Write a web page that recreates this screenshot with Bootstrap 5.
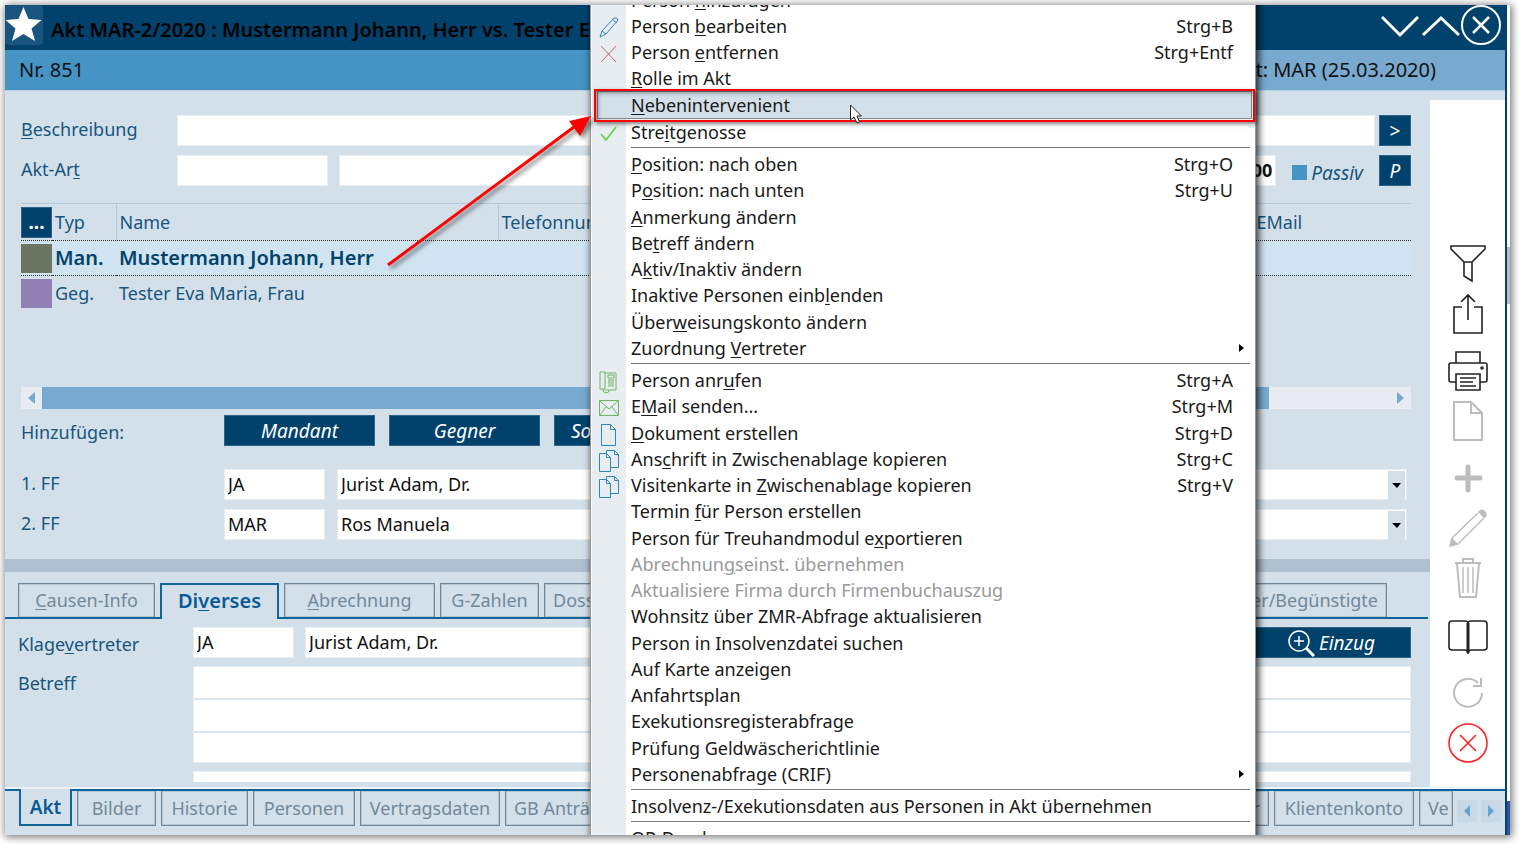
<!DOCTYPE html>
<html lang="de">
<head>
<meta charset="utf-8">
<meta name="viewport" content="width=device-width, initial-scale=1">
<title>Akt MAR-2/2020</title>
<link href="https://cdn.jsdelivr.net/npm/bootstrap@5.3.0/dist/css/bootstrap.min.css" rel="stylesheet">
<script src="https://cdn.jsdelivr.net/npm/bootstrap@5.3.0/dist/js/bootstrap.bundle.min.js"></script>
<style>
:root{--navy:#00426b;--blue:#4594c4;--sky:#78aacf;--pane:#d4e0e9;--label:#16567f;--line:#b4cadb;--tab:#71889a;--accent:#0f6499}
body{font-family:"Noto Sans","Open Sans",sans-serif;font-size:18px;line-height:26px;color:#111;background:#fff}
u{text-underline-offset:2px;text-decoration-thickness:1px}
.frame{margin:5px 9px 9px 5px;padding-right:3px;box-shadow:1px 1px 8px 1px rgba(0,0,0,.55);
 background:linear-gradient(#fff 242px,#bcbcbc 242px,#bcbcbc 299px,#fff 299px,#fff 796px,#2b55a0 796px)}
.app{border-right:2px solid var(--navy);background:var(--pane);overflow:hidden}
.titlebar{height:45px;background:var(--navy);font-weight:600;font-size:20px;color:#000}
.starbox{width:38px;height:40px;background:#1a5580;border-radius:4px}
.winbtn{background:none;border:0;padding:0;width:40px;height:40px;line-height:0}
.infobar{height:41px;background:var(--sky);border-bottom:1px solid #b9d0e2;font-size:20px}
.infobar .nr{width:50%;background:var(--blue);padding-left:14px}
.infobar .last{padding-right:69px}
.main{padding-top:24px}
.upper{padding-left:16px;padding-right:19px}
.lab{color:var(--label);white-space:nowrap;padding-top:1px}
.upper .w-a{width:156px}.upper .w-b{width:203px}
.lower{padding-left:13px;padding-right:19px}
.lower .lab{width:175px;padding-top:4px}
.field{height:31px;border:1px solid #e6edf3;background:#fff;border-radius:0;padding:0 3px 2px;color:#111;min-width:0;outline:0;appearance:none}
.w100{width:101px}.w150{width:151px}
.rowgap{margin-bottom:9px}
.gap10{margin-left:11px;margin-right:11px}
.navybtn{height:31px;border:1px solid #2f6488;background:var(--navy);color:#fff;border-radius:0;padding:0;font-style:italic;font-size:19px;line-height:26px;white-space:nowrap}
.sq{width:32px}
.passiv{font-size:19px;font-style:italic}
.tick{appearance:none;width:15px;height:15px;background:var(--blue);margin:0}
.persons{height:184px;margin-top:17px}
.persons table{table-layout:fixed;color:var(--label);line-height:26px}
.persons th{font-weight:400;height:37px;border-top:1px solid var(--line);border-left:1px solid var(--line);padding:0 3px}
.persons th:first-child,.persons th:nth-child(2){border-left:0}
.persons td{height:35px;padding:0 3px}
.persons .first{padding:0}
.persons .sel td{background:#cfe3f1;border:dotted #333;border-width:1px 0;font-weight:600;font-size:20px;color:var(--navy)}
.swatch{width:31px;height:29px}
.scroller{height:22px;background:#e8ecf2}
.scroller button{width:21px;border:0;background:#e8ecf2;padding:0;line-height:0}
.thumb{width:1227px;background:var(--sky)}
.adds{margin:6px 0 23px}
.adds .lab{padding-top:4px}
.adds .d-flex{gap:14px}
.combo{margin-right:4px}
.combo svg{right:2px;top:2px;width:17px;height:29px;background:var(--pane);pointer-events:none}
.splitter{height:13px;background:#afbfcd;margin-top:19px}
.tabs{border-bottom:2px solid var(--accent);height:36px;margin-right:2px;padding-left:13px;margin-top:11px}
.tabbtn{border:1px solid var(--tab);box-shadow:0 0 0 1px #b5c4cf inset;background:var(--pane);color:var(--tab);padding:0;white-space:nowrap;flex:none}
.tabs .tabbtn{border-bottom:0;height:34px;padding-bottom:2px}
.tabs .on{height:36px;font-size:20px;padding-bottom:3px}
.tabs .lasttab{margin-right:41px}
.tabgap{margin:0 5px}
.on{border:2px solid var(--accent);box-shadow:none;color:#075b96;font-weight:600}
.betreff{height:97px;resize:none;line-height:32px;overflow:hidden;background:repeating-linear-gradient(#fff 0 31px,#d9e4ec 31px 33px)}
.cutrow{height:11px;overflow:hidden;margin:8px 0 5px}
.side{width:75px;background:#fff;margin-top:9px;padding-top:139px;flex:none}
.side button{display:block;border:0;background:none;padding:0;margin:0 auto;width:50px;height:50px;line-height:0}
.side .sp{margin-top:7px}
.side svg{fill:none;stroke:#222;stroke-width:1.6}
.side .off svg{stroke:#bcbcbc;stroke-width:2}
.foot{height:48px;border-top:2px solid #eef3f7}
.foot .bar{border-top:2px solid var(--accent);padding:0 4px 0 14px;height:46px}
.foot .tabbtn{border-top:0;height:35px}
.foot .on{position:relative;margin-top:-2px;height:37px;background:var(--pane);font-size:19px}
.foot .pg{width:20px;height:22px;border:0;padding:0;background:#c8d8e4;line-height:0;margin-top:9px}
.ctx{position:absolute;left:585px;top:-19px;width:666px;border:1px solid #999;border-radius:0;padding:0;margin:0;
 background:linear-gradient(90deg,#fafafa 1px,#e8edf1 1px,#e8edf1 35px,#fff 35px);box-shadow:2px 0 7px 1px rgba(0,0,0,.75);color:#111;z-index:5}
.ctx ul{list-style:none;margin:0;padding:0;display:flex;flex-direction:column}
.ctx li{flex:1 1 0;min-height:0;position:relative}
.ctx button{display:flex;align-items:center;width:100%;height:100%;border:0;background:none;padding:0 22px 0 0;line-height:26px;color:#1a1a1a;text-align:left;white-space:nowrap}
.ctx button:disabled{color:#999}
.ctx .ic{width:40px;height:26px;padding:3px 0 0 7px;flex:none;line-height:0}
.ctx .ic svg{fill:none;stroke:#2d86bd;stroke-width:1}
.ctx .sub{padding-right:10px}
.ctx hr{margin:2px 5px 3px 40px;border-top:1px solid #777;opacity:1}
.g1{height:158px}.g2{height:210px}.g3{height:420px}.g4{height:26px}
.hot{background:var(--pane);border:1px solid #7f8a92;margin:0 3px 0 6px}
.hot .ic{width:33px}
.mark-red{position:absolute;inset:-3px -4px -4px -4px;border:2px solid #f00;box-shadow:2px 2px 4px rgba(0,0,0,.5),inset 2px 2px 4px rgba(0,0,0,.4);pointer-events:none}
.pointer{position:absolute;left:251px;top:12px;z-index:2}
.arrow{position:absolute;left:375px;top:100px;filter:drop-shadow(3px 3px 2px rgba(0,0,0,.5));z-index:6;pointer-events:none}
</style>
</head>
<body>
<div class="frame">
<div class="app position-relative">
  <header class="titlebar d-flex align-items-center">
    <div class="starbox flex-shrink-0 align-self-start"><svg width="38" height="40" viewBox="0 0 38 40"><path fill="#fff" d="M18.500 2 L23.500 14 L36.500 15 L26.500 23.500 L30 36 L18.500 29 L7 36 L10.500 23.500 L.5 15 L13.500 14Z"/></svg></div>
    <div class="ps-2 pt-1 text-nowrap">Akt MAR-2/2020 : Mustermann Johann, Herr vs. Tester Eva Maria, Frau</div>
    <div class="ms-auto d-flex align-self-start">
      <button class="winbtn" aria-label="Nach unten"><svg width="40" height="40" fill="none" stroke="#fff" stroke-width="3"><path d="M1 12l18 18 18-18"/></svg></button>
      <button class="winbtn" aria-label="Nach oben"><svg width="40" height="40" fill="none" stroke="#fff" stroke-width="3"><path d="M2 30l18-17 18 17"/></svg></button>
      <button class="winbtn me-1" aria-label="Schließen"><svg width="40" height="40" fill="none" stroke="#fff" stroke-width="2"><circle cx="20" cy="20" r="19"/><path stroke-width="2.500" d="M12 12l16 16M28 12l-16 16"/></svg></button>
    </div>
  </header>
  <div class="infobar d-flex">
    <div class="nr d-flex align-items-center">Nr. 851</div>
    <div class="last d-flex align-items-center ms-auto">Zuletzt: MAR (25.03.2020)</div>
  </div>

  <div class="d-flex">
    <main class="main flex-grow-1 overflow-hidden">
      <section class="upper">
        <div class="d-flex rowgap">
          <label class="lab w-a" for="beschr"><u>B</u>eschreibung</label>
          <input id="beschr" class="field flex-grow-1">
          <button class="navybtn sq ms-1 fst-normal">&gt;</button>
        </div>
        <div class="d-flex align-items-start">
          <label class="lab w-a" for="art">Akt-Ar<u>t</u></label>
          <input id="art" class="field w150">
          <input class="field flex-grow-1 gap10" aria-label="Bezeichnung der Akt-Art">
          <input class="field w150 fw-bold text-end" value="0,00" aria-label="Betrag">
          <div class="d-flex align-items-center gap-1 ms-3 mt-1"><input type="checkbox" class="tick" id="passiv"><label class="lab passiv" for="passiv">Passiv</label></div>
          <button class="navybtn sq ms-3">P</button>
        </div>
        <div class="persons">
          <table class="w-100">
            <colgroup><col style="width:31px"><col style="width:64px"><col style="width:382px"><col style="width:755px"><col></colgroup>
            <thead><tr><th class="first"><button class="navybtn w-100 fst-normal d-block fw-bold">...</button></th><th>Typ</th><th>Name</th><th>Telefonnummer</th><th>EMail</th></tr></thead>
            <tbody>
              <tr class="sel"><td class="first"><div class="swatch" style="background:#6a7564"></div></td><td>Man.</td><td>Mustermann Johann, Herr</td><td></td><td></td></tr>
              <tr><td class="first"><div class="swatch" style="background:#9280b4"></div></td><td>Geg.</td><td>Tester Eva Maria, Frau</td><td></td><td></td></tr>
            </tbody>
          </table>
        </div>
        <div class="scroller d-flex">
          <button aria-label="Links"><svg width="21" height="22"><path fill="#78aacf" d="M14 5v12l-7-6z"/></svg></button>
          <div class="thumb"></div>
          <button class="ms-auto" aria-label="Rechts"><svg width="21" height="22"><path fill="#78aacf" d="M7 5v12l7-6z"/></svg></button>
        </div>
        <div class="d-flex adds">
          <div class="lab w-b">Hinzufügen:</div>
          <div class="d-flex"><button class="navybtn w150">Mandant</button><button class="navybtn w150">Gegner</button><button class="navybtn w150 text-start ps-3">Sonstige</button></div>
        </div>
        <div class="d-flex rowgap">
          <label class="lab w-b" for="ff1">1. FF</label>
          <input id="ff1" class="field w100" value="JA">
          <div class="combo position-relative flex-grow-1 d-flex ms-2 ps-1"><select class="field w-100" aria-label="Name 1. FF"><option>Jurist Adam, Dr.</option></select><svg class="position-absolute"><path d="M4 12h9l-4 5z"/></svg></div>
        </div>
        <div class="d-flex">
          <label class="lab w-b" for="ff2">2. FF</label>
          <input id="ff2" class="field w100" value="MAR">
          <div class="combo position-relative flex-grow-1 d-flex ms-2 ps-1"><select class="field w-100" aria-label="Name 2. FF"><option>Ros Manuela</option></select><svg class="position-absolute"><path d="M4 12h9l-4 5z"/></svg></div>
        </div>
      </section>
      <div class="splitter"></div>
      <nav class="tabs d-flex align-items-start">
        <button class="tabbtn" style="width:137px"><u>C</u>ausen-Info</button>
        <button class="tabbtn on tabgap" style="width:119px">Di<u>v</u>erses</button>
        <button class="tabbtn" style="width:151px"><u>A</u>brechnung</button>
        <button class="tabbtn tabgap" style="width:99px">G-Zahlen</button>
        <button class="tabbtn px-2">Dossier</button>
        <button class="tabbtn ms-auto lasttab px-2">Versicherer/Begünstigte</button>
      </nav>
      <section class="lower pt-2">
        <div class="d-flex mb-2">
          <label class="lab" for="kv">Klage<u>v</u>ertreter</label>
          <input id="kv" class="field w100" value="JA">
          <input class="field flex-grow-1 gap10 me-0" value="Jurist Adam, Dr." aria-label="Name Klagevertreter">
          <button class="navybtn d-flex align-items-center justify-content-center gap-1" style="width:160px"><svg width="28" height="28" fill="none" stroke="#fff" stroke-width="1.500"><circle cx="12" cy="12" r="10"/><path d="M7 12h10M12 7v10"/><path stroke-width="3" d="M19 19l8 8"/></svg>Einzug</button>
        </div>
        <div class="d-flex">
          <label class="lab" for="betreff">Betreff</label>
          <textarea id="betreff" class="field betreff flex-grow-1"></textarea>
        </div>
        <div class="cutrow d-flex align-items-start">
          <div class="lab"></div>
          <input class="field flex-grow-1" aria-label="Weiteres Feld">
        </div>
      </section>
    </main>
    <aside class="side">
      <button aria-label="Filter"><svg width="42" height="42"><path d="M4 3h34v3L25 19H17L4 6zM17 19v14l8 5V19H17"/></svg></button>
      <button aria-label="Teilen"><svg width="42" height="42"><path d="M15 14H7v26h28V14h-8M21 27V3M14 9l7-7 7 7"/></svg></button>
      <button class="sp" aria-label="Drucken"><svg width="42" height="42"><path d="M9 13V2h24v11M9 32H4q-2 0-2-2V15q0-2 2-2h34q2 0 2 2v15q0 2-2 2h-5M9 24h24v16H9zM13 28h16M13 32h13M13 36h16"/><circle cx="35" cy="18" r="1"/></svg></button>
      <button class="off" aria-label="Dokument"><svg width="42" height="42"><path d="M7 2h17l11 11v27H7zM24 2v11h11"/></svg></button>
      <button class="off sp" aria-label="Neu"><svg width="42" height="42"><path style="stroke-width:5" stroke-linecap="round" d="M21 10v23M10 21h23"/></svg></button>
      <button class="off" aria-label="Bearbeiten"><svg width="42" height="42"><path stroke-width="1.500" d="M5 31L31 6M11 37L37 11M5 31L3 39l8-2"/><path fill="#bcbcbc" stroke="none" d="M3 39l2-8 6 6zM32 4q3-3 6 0t1 6l-2 1-6-6z"/></svg></button>
      <button class="off" aria-label="Löschen"><svg width="42" height="42"><path d="M8 6h26M16 5V2h10v3M10 7l3 33h16l3-33"/><path stroke-width="1.500" d="M16 10v26M21 10v26M26 10v26"/></svg></button>
      <button class="sp" aria-label="Nachschlagen"><svg width="42" height="42"><path d="M21 9q0-2-3-2H5Q2 7 2 10v23q0 3 3 3h13q3 0 3 3 0-3 3-3h13q3 0 3-3V10q0-3-3-3H24q-3 0-3 2v31"/><path style="stroke-width:3" d="M21 9v30"/></svg></button>
      <button class="off sp" aria-label="Aktualisieren"><svg width="42" height="42"><path d="M35 22A14 14 0 1 1 31 12M34 7v8h-8"/></svg></button>
      <button aria-label="Abbrechen"><svg width="42" height="42" style="stroke:#f22"><circle cx="21" cy="22" r="19"/><path d="M13 14l16 16M29 14L13 30"/></svg></button>
    </aside>
  </div>

  <footer class="foot"><div class="bar d-flex align-items-start">
    <button class="tabbtn on" style="width:53px">Akt</button>
    <button class="tabbtn tabgap" style="width:79px">Bilder</button>
    <button class="tabbtn" style="width:87px">Historie</button>
    <button class="tabbtn tabgap" style="width:102px">Personen</button>
    <button class="tabbtn" style="width:140px">Vertragsdaten</button>
    <button class="tabbtn tabgap px-2">GB Anträge</button>
    <button class="tabbtn ms-auto px-2">Register</button>
    <button class="tabbtn tabgap" style="width:140px">Klientenkonto</button>
    <button class="tabbtn ps-2 text-start overflow-hidden" style="width:34px">Ve</button>
    <button class="pg ms-1" aria-label="Zurück"><svg width="20" height="22"><path fill="#62a5d0" d="M13 5v12l-6-6z"/></svg></button>
    <button class="pg ms-1" aria-label="Weiter"><svg width="20" height="22"><path fill="#62a5d0" d="M7 5v12l6-6z"/></svg></button>
  </div></footer>

  <svg class="arrow" width="220" height="170"><path stroke="#f00" stroke-width="3" d="M8 160L198 19"/><path fill="#f00" d="M211 11l-22 5 11 15z"/></svg>

  <div class="ctx">
    <ul class="g1">
      <li><button><span class="ic"></span><span>Person <u>h</u>inzufügen</span></button></li>
      <li><button><span class="ic"><svg width="22" height="22"><path d="M2 21l2-6L16 2q3-1 4 2L8 18zM4 15l4 3M15 4l4 3"/></svg></span><span>Person <u>b</u>earbeiten</span><span class="ms-auto">Strg+B</span></button></li>
      <li><button><span class="ic"><svg width="22" height="22" style="stroke:#c9605c"><path d="M3 4l15 16M18 4L3 20"/></svg></span><span>Person <u>e</u>ntfernen</span><span class="ms-auto">Strg+Entf</span></button></li>
      <li><button><span class="ic"></span><span><u>R</u>olle im Akt</span></button></li>
      <li class="hot"><button><span class="ic"></span><span><u>N</u>ebenintervenient</span></button><div class="mark-red"></div>
        <svg class="pointer" width="14" height="20"><path fill="#fff" stroke="#222" d="M1.500 1v15l3.500-3 3 6 2.500-1-2.500-6h4.500z"/></svg></li>
      <li><button><span class="ic"><svg width="22" height="22" style="stroke:#5bd03c;stroke-width:1.500"><path d="M3 12l5 6L18 5"/></svg></span><span>Stre<u>i</u>tgenosse</span></button></li>
    </ul>
    <hr>
    <ul class="g2">
      <li><button><span class="ic"></span><span><u>P</u>osition: nach oben</span><span class="ms-auto">Strg+O</span></button></li>
      <li><button><span class="ic"></span><span>P<u>o</u>sition: nach unten</span><span class="ms-auto">Strg+U</span></button></li>
      <li><button><span class="ic"></span><span><u>A</u>nmerkung ändern</span></button></li>
      <li><button><span class="ic"></span><span>Be<u>t</u>reff ändern</span></button></li>
      <li><button><span class="ic"></span><span>A<u>k</u>tiv/Inaktiv ändern</span></button></li>
      <li><button><span class="ic"></span><span>Inaktive Personen einb<u>l</u>enden</span></button></li>
      <li><button><span class="ic"></span><span>Über<u>w</u>eisungskonto ändern</span></button></li>
      <li><button class="sub"><span class="ic"></span><span>Zuordnung <u>V</u>ertreter</span><svg class="ms-auto" width="6" height="8"><path d="M0 0l5 4-5 4z"/></svg></button></li>
    </ul>
    <hr>
    <ul class="g3">
      <li><button><span class="ic"><svg width="22" height="24" style="stroke:#6fb562"><path d="M2 2h5v17H2zM7 3h11v17H7M10 5h6v3h-6zM10 10h6M10 12h6M10 14h6M10 16h6M5 19q0 4 3 4t3-3"/></svg></span><span>Person anr<u>u</u>fen</span><span class="ms-auto">Strg+A</span></button></li>
      <li><button><span class="ic"><svg width="22" height="22" style="stroke:#6fb562"><path d="M1.500 4.500h19v15h-19zM2 5l9 8 9-8M2 19l6-8M20 19l-6-8"/></svg></span><span>E<u>M</u>ail senden...</span><span class="ms-auto">Strg+M</span></button></li>
      <li><button><span class="ic"><svg width="22" height="24"><path d="M3.500 1.500h9l5 5v16h-14zM12.500 1.500v5h5"/></svg></span><span><u>D</u>okument erstellen</span><span class="ms-auto">Strg+D</span></button></li>
      <li><button><span class="ic"><svg width="22" height="24"><path d="M1.500 4.500h7l4 4v14h-11zM8.500 4.500v4h4M8.500 4V1.500h8l4 4v13h-8M16.500 1.500v4h4"/></svg></span><span>Ans<u>c</u>hrift in Zwischenablage kopieren</span><span class="ms-auto">Strg+C</span></button></li>
      <li><button><span class="ic"><svg width="22" height="24"><path d="M1.500 4.500h7l4 4v14h-11zM8.500 4.500v4h4M8.500 4V1.500h8l4 4v13h-8M16.500 1.500v4h4"/></svg></span><span>Visitenkarte in <u>Z</u>wischenablage kopieren</span><span class="ms-auto">Strg+V</span></button></li>
      <li><button><span class="ic"></span><span>Termin <u>f</u>ür Person erstellen</span></button></li>
      <li><button><span class="ic"></span><span>Person für Treuhandmodul e<u>x</u>portieren</span></button></li>
      <li><button disabled><span class="ic"></span><span>Abrechnun<u>g</u>seinst. übernehmen</span></button></li>
      <li><button disabled><span class="ic"></span><span>Aktualisiere Firma durch Firmenbuchauszug</span></button></li>
      <li><button><span class="ic"></span><span>Wohnsitz über ZMR-Abfrage aktualisieren</span></button></li>
      <li><button><span class="ic"></span><span>Person in Insolvenzdatei suchen</span></button></li>
      <li><button><span class="ic"></span><span>Auf Karte anzeigen</span></button></li>
      <li><button><span class="ic"></span><span>Anfahrtsplan</span></button></li>
      <li><button><span class="ic"></span><span>Exekutionsregisterabfrage</span></button></li>
      <li><button><span class="ic"></span><span>Prüfung Geldwäscherichtlinie</span></button></li>
      <li><button class="sub"><span class="ic"></span><span>Personenabfrage (CRIF)</span><svg class="ms-auto" width="6" height="8"><path d="M0 0l5 4-5 4z"/></svg></button></li>
    </ul>
    <hr>
    <ul class="g4"><li><button><span class="ic"></span><span>Insolvenz-/Exekutionsdaten aus Personen in Akt übernehmen</span></button></li></ul>
    <hr>
    <ul class="g4"><li><button><span class="ic"></span><span>OP-Druck</span></button></li></ul>
  </div>
</div>
</div>
</body>
</html>
